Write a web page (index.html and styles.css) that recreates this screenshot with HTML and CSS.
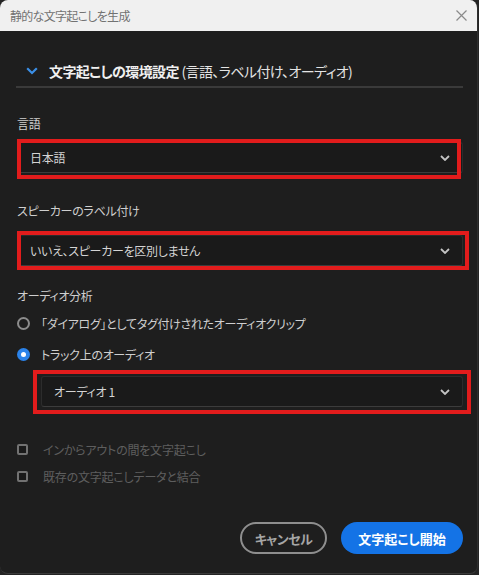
FILE: index.html
```html
<!DOCTYPE html>
<html lang="ja">
<head>
    <meta charset="UTF-8">
    <meta name="viewport" content="width=device-width, initial-scale=1.0">
    <title>静的な文字起こしを生成</title>
    <link rel="stylesheet" href="styles.css">
</head>
<body>
    <div class="dialog">
        <div class="titlebar">
            <span class="title">静的な文字起こしを生成</span>
            <svg class="close" width="11" height="11" viewBox="0 0 11 11">
                <path d="M0.5 0.5 L10.5 10.5 M10.5 0.5 L0.5 10.5" stroke="#8a8a8a" stroke-width="1.2" fill="none"/>
            </svg>
        </div>

        <div class="content">
            <div class="section-head">
                <svg class="twisty" width="12" height="8" viewBox="0 0 12 8">
                    <polyline points="1.2,1.2 6,6 10.8,1.2" stroke="#3b8fe6" stroke-width="2.2" fill="none"/>
                </svg>
                <span class="section-title"><b>文字起こしの環境設定</b> (言語、ラベル付け、オーディオ)</span>
            </div>

            <div class="label label-lang">言語</div>
            <div class="picker picker-lang">
                <div class="select">
                    <span>日本語</span>
                    <svg class="caret" width="10" height="6" viewBox="0 0 10 6"><polyline points="1,1 5,5 9,1" stroke="#c4c4c4" stroke-width="1.8" fill="none"/></svg>
                </div>
            </div>

            <div class="label label-speaker">スピーカーのラベル付け</div>
            <div class="picker picker-speaker">
                <div class="select">
                    <span>いいえ、スピーカーを区別しません</span>
                    <svg class="caret" width="10" height="6" viewBox="0 0 10 6"><polyline points="1,1 5,5 9,1" stroke="#c4c4c4" stroke-width="1.8" fill="none"/></svg>
                </div>
            </div>

            <div class="label label-audio">オーディオ分析</div>
            <div class="radios">
                <div class="radio-row">
                    <span class="radio"></span>
                    <span>「ダイアログ」としてタグ付けされたオーディオクリップ</span>
                </div>
                <div class="radio-row">
                    <span class="radio checked"></span>
                    <span>トラック上のオーディオ</span>
                </div>
            </div>
            <div class="picker picker-track">
                <div class="select">
                    <span>オーディオ 1</span>
                    <svg class="caret" width="10" height="6" viewBox="0 0 10 6"><polyline points="1,1 5,5 9,1" stroke="#c4c4c4" stroke-width="1.8" fill="none"/></svg>
                </div>
            </div>

            <div class="checks">
                <div class="check-row"><span class="box"></span><span>インからアウトの間を文字起こし</span></div>
                <div class="check-row"><span class="box"></span><span>既存の文字起こしデータと結合</span></div>
            </div>

            <div class="footer">
                <button class="btn btn-cancel">キャンセル</button>
                <button class="btn btn-primary">文字起こし開始</button>
            </div>
        </div>
    </div>
</body>
</html>
```

FILE: styles.css
```css
html, body {
    margin: 0;
    padding: 0;
    background: #242424;
}
body {
    font-family: "Noto Sans CJK JP", "Noto Sans", sans-serif;
    font-feature-settings: "palt";
    color: #d2d2d2;
    width: 479px;
    height: 575px;
    overflow: hidden;
}
.dialog {
    width: 478px;
    height: 574px;
    background: #1e1e1e;
    border-radius: 8px;
    overflow: hidden;
    display: flex;
    flex-direction: column;
    box-sizing: border-box;
    border-right: 1px solid #2e2e2e;
    border-bottom: 1px solid #3a3a3a;
}
.titlebar {
    height: 31px;
    flex: none;
    background: #f0f0f0;
    display: flex;
    align-items: center;
    justify-content: space-between;
    padding: 0 10px;
}
.title {
    font-size: 12px;
    letter-spacing: -0.7px;
    color: #727272;
    line-height: 16px;
}
.close {
    display: block;
}
.content {
    flex: 1;
    display: flex;
    flex-direction: column;
    padding: 0 14px 19px 17px;
}
.section-head {
    margin-top: 30px;
    margin-left: -1px;
    display: flex;
    align-items: center;
    gap: 11px;
    padding: 0 0 5px 10px;
    height: 20px;
    border-bottom: 2px solid #3a3a3a;
}
.twisty {
    display: block;
}
.section-title {
    font-size: 14px;
    letter-spacing: -0.6px;
    line-height: 20px;
    color: #e4e4e4;
}
.section-title b {
    font-weight: 700;
    color: #f0f0f0;
}
.label {
    font-size: 12px;
    letter-spacing: -0.3px;
    line-height: 18px;
    color: #cfcfcf;
}
.label-lang {
    margin-top: 27px;
}
.label-speaker {
    margin-top: 29px;
}
.label-audio {
    margin-top: 21px;
}
.picker {
    position: relative;
}
.picker-lang {
    margin-top: 9px;
}
.picker-speaker {
    margin-top: 15px;
}
.picker-track {
    margin-top: 11px;
    margin-left: 24px;
}
.select {
    height: 31px;
    box-sizing: border-box;
    background: #1a1a1a;
    border: 1px solid #2c2c2c;
    border-bottom-color: #3c3c3c;
    border-radius: 3px;
    display: flex;
    align-items: center;
    justify-content: space-between;
    padding: 0 12px 0 12px;
    font-size: 12px;
    letter-spacing: -0.3px;
    color: #d4d4d4;
}
.caret {
    display: block;
}
/* red callout frames over the pickers */
.picker::after {
    content: "";
    position: absolute;
    border: 4px solid #e21c1c;
    pointer-events: none;
}
.picker-lang::after {
    top: -3px;
    left: 0;
    right: 2px;
    bottom: -6px;
}
.picker-speaker::after {
    top: -4px;
    left: 0;
    right: -6px;
    bottom: -4px;
}
.picker-track::after {
    top: -6px;
    left: -8px;
    right: -8px;
    bottom: -7px;
}
.radios {
    margin-top: 7px;
    display: flex;
    flex-direction: column;
    gap: 9px;
}
.radio-row {
    display: flex;
    align-items: center;
    height: 22px;
    gap: 11px;
    font-size: 12px;
    letter-spacing: -0.3px;
    color: #cfcfcf;
}
.radio {
    width: 13px;
    height: 13px;
    box-sizing: border-box;
    border: 2px solid #8c8c8c;
    border-radius: 50%;
    flex: none;
}
.radio.checked {
    border: none;
    background: #2b83ea;
    display: flex;
    align-items: center;
    justify-content: center;
}
.radio.checked::after {
    content: "";
    width: 5px;
    height: 5px;
    border-radius: 50%;
    background: #fff;
}
.checks {
    margin-top: 32px;
    display: flex;
    flex-direction: column;
    gap: 7px;
}
.check-row {
    display: flex;
    align-items: center;
    height: 20px;
    gap: 15px;
    font-size: 12px;
    letter-spacing: -0.2px;
    color: #5e5e5e;
}
.box {
    width: 11px;
    height: 11px;
    box-sizing: border-box;
    border: 2px solid #727272;
    border-radius: 2px;
    background: #1a1a1a;
    flex: none;
}
.footer {
    margin-top: auto;
    display: flex;
    justify-content: flex-end;
    gap: 14px;
}
.btn {
    height: 32px;
    box-sizing: border-box;
    border-radius: 16px;
    font-family: inherit;
    font-feature-settings: "palt";
    font-size: 13px;
    font-weight: 700;
    cursor: pointer;
}
.btn-cancel {
    width: 87px;
    background: transparent;
    border: 2px solid #8e8e8e;
    color: #a6a6a6;
    letter-spacing: -0.5px;
}
.btn-primary {
    width: 122px;
    background: #1473e6;
    border: none;
    color: #fff;
}
```
